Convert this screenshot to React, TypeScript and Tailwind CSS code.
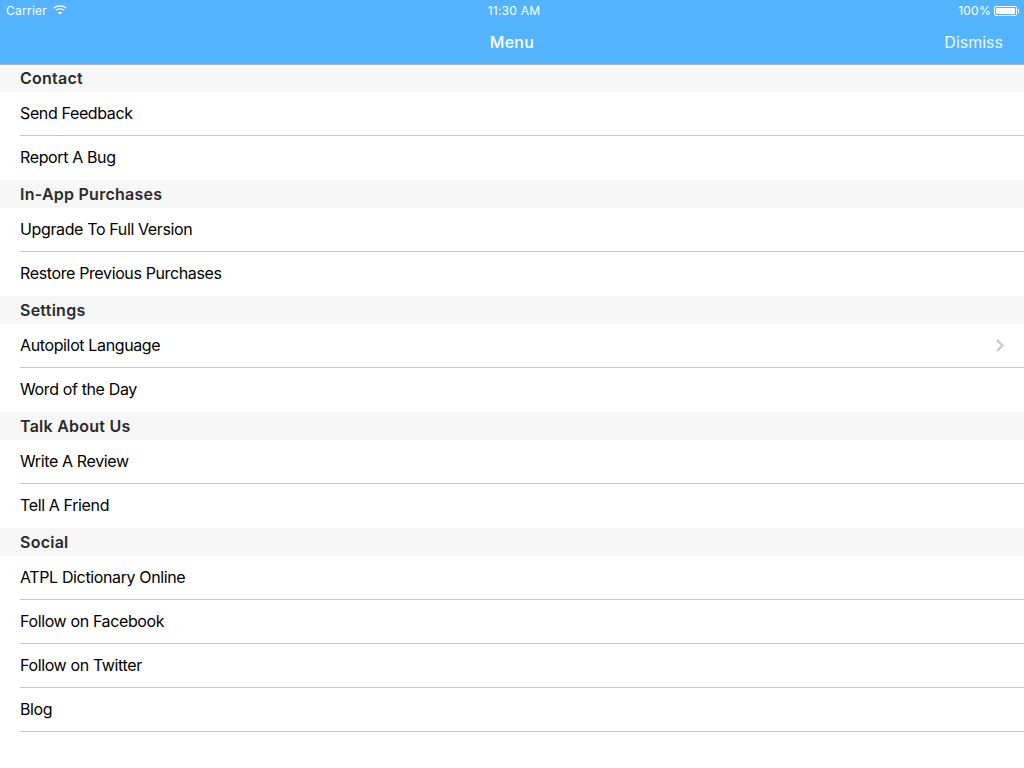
const sections: { title: string; rows: string[] }[] = [
  { title: "Contact", rows: ["Send Feedback", "Report A Bug"] },
  { title: "In-App Purchases", rows: ["Upgrade To Full Version", "Restore Previous Purchases"] },
  { title: "Settings", rows: ["Autopilot Language", "Word of the Day"] },
  { title: "Talk About Us", rows: ["Write A Review", "Tell A Friend"] },
  { title: "Social", rows: ["ATPL Dictionary Online", "Follow on Facebook", "Follow on Twitter", "Blog"] },
];

function Wifi() {
  return (
    <svg width="14" height="10" viewBox="0 0 14 10" fill="none" stroke="white" strokeWidth="1.3" className="ml-[6px] mt-[-1px]">
      <path d="M0.8 3.2 C4.2 0.1 9.8 0.1 13.2 3.2" />
      <path d="M2.9 5.3 C5.2 3.3 8.8 3.3 11.1 5.3" />
      <path d="M7 9.6 L4.9 7.4 C6.1 6.4 7.9 6.4 9.1 7.4 Z" fill="white" stroke="none" />
    </svg>
  );
}

function Battery() {
  return (
    <div className="flex items-center ml-[3px]">
      <div className="w-[23px] h-[10px] rounded-[2px] border border-white p-[1px] flex">
        <div className="flex-1 bg-white rounded-[1px]" />
      </div>
      <div className="w-[1px] h-[4px] bg-white ml-[1px]" />
    </div>
  );
}

export default function App() {
  return (
    <div className="w-[1024px] h-[768px] bg-white overflow-hidden font-['Inter',sans-serif]">
      <header className="h-[65px] bg-[#53b4fd] border-b border-[#b2b2b2] text-white flex flex-col">
        <div className="h-[20px] pt-[1px] grid grid-cols-3 items-center pl-[6px] pr-[5px] text-[12px] tracking-[0.25px]">
          <div className="flex items-center">Carrier<Wifi /></div>
          <div className="text-center pl-[3px]">11:30 AM</div>
          <div className="flex items-center justify-end">100%<Battery /></div>
        </div>
        <div className="flex-1 grid grid-cols-3 items-center pl-[21px] pr-[21px] pb-[1px]">
          <div />
          <div className="text-center text-[16px] font-medium tracking-[0.3px]">Menu</div>
          <div className="text-right text-[16px] text-[#eef7ff]">Dismiss</div>
        </div>
      </header>
      <main>
        {sections.map((s, i) => (
          <section key={s.title}>
            <div className={`${i === 0 ? "h-[27px] pb-[1px]" : "h-[28px]"} bg-[#f7f7f7] pl-[20px] flex items-center text-[16px] font-semibold tracking-[0.25px] text-[#2b2b2b]`}>
              {s.title}
            </div>
            {s.rows.map((r, j) => {
              const sep = j < s.rows.length - 1 || s.title === "Social";
              return (
                <div key={r} className="pl-[20px]">
                  <div className={`h-[44px] pb-[2px] flex items-center justify-between pr-[20px] text-[16px] tracking-[-0.37px] text-black ${sep ? "border-b border-[#c8c7cc]" : ""}`}>
                    <span>{r}</span>
                    {r === "Autopilot Language" && (
                      <svg width="8" height="13" viewBox="0 0 8 13" fill="none" stroke="#c7c7cc" strokeWidth="2" className="mt-[2px]">
                        <path d="M1 1 L6.5 6.5 L1 12" />
                      </svg>
                    )}
                  </div>
                </div>
              );
            })}
          </section>
        ))}
      </main>
    </div>
  );
}
